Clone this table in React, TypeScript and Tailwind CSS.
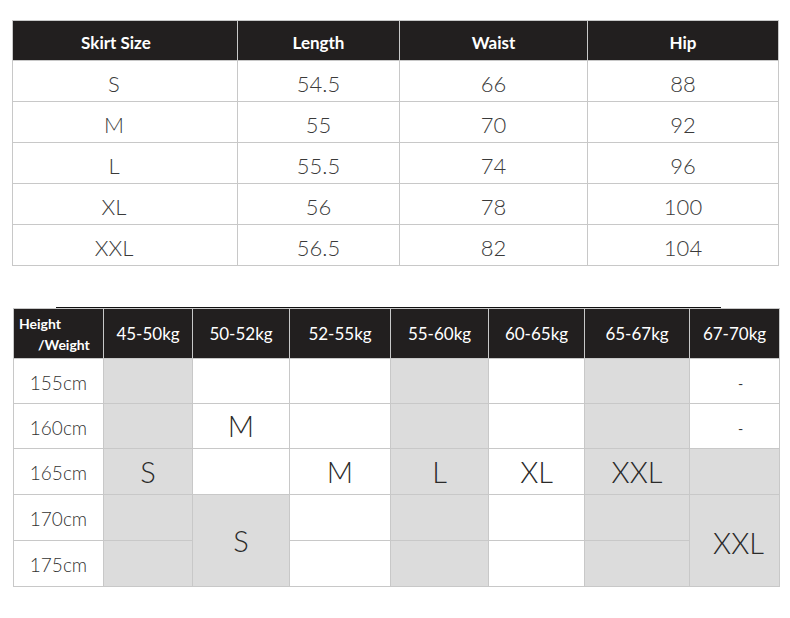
const skirt = [
  ['S', '54.5', '66', '88'],
  ['M', '55', '70', '92'],
  ['L', '55.5', '74', '96'],
  ['XL', '56', '78', '100'],
  ['XXL', '56.5', '82', '104'],
]

const weights = ['45-50kg', '50-52kg', '52-55kg', '55-60kg', '60-65kg', '65-67kg', '67-70kg']
const heights = ['155cm', '160cm', '165cm', '170cm', '175cm']

const gray = 'bg-[#dcdcdc]'
const white = 'bg-white'
const big = 'flex items-center justify-center text-[29px] font-light text-[#2a2a2a]'

export default function App() {
  return (
    <div className="w-[790px] h-[618px] bg-white pt-5 pl-3 font-['Lato',sans-serif]">
      {/* skirt size table */}
      <div className="grid w-[767px] grid-cols-[224px_161px_187px_190px] grid-rows-[39px_40px_40px_40px_40px_40px] gap-px bg-[#c8c8c8] p-px">
        {['Skirt Size', 'Length', 'Waist', 'Hip'].map((h, i) => (
          <div
            key={h}
            className={`flex items-center justify-center bg-[#221f1f] pt-1 text-[17px] font-bold text-white ${i === 0 ? 'pr-[18px]' : ''}`}
          >
            {h}
          </div>
        ))}
        {skirt.map((row) =>
          row.map((v, i) => (
            <div
              key={row[0] + i}
              className={`flex items-center justify-center bg-white pt-1 text-[22px] font-light text-[#3a3a3a] ${i === 0 ? 'pr-[22px]' : ''}`}
            >
              {v}
            </div>
          ))
        )}
      </div>

      {/* height / weight table */}
      <div className="mt-[41px] ml-[44px] h-px w-[665px] bg-[#111]" />
      <div className="ml-px grid w-[767px] grid-cols-[89px_88px_96px_100px_97px_95px_104px_89px] grid-rows-[49px_44px_44px_45px_45px_45px] gap-px bg-[#c8c8c8] p-px">
        <div className="flex flex-col justify-center bg-[#221f1f] pl-[5px] text-[14px] font-bold leading-[21px] text-white">
          <span>Height</span>
          <span className="pl-[19px]">/Weight</span>
        </div>
        {weights.map((w) => (
          <div key={w} className="flex items-center justify-center bg-[#221f1f] text-[17px] text-white">
            {w}
          </div>
        ))}

        {heights.map((h, r) => (
          <div
            key={h}
            className="col-start-1 flex items-center justify-center bg-white pt-1 text-[19px] font-light text-[#333]"
            style={{ gridRowStart: r + 2 }}
          >
            {h}
          </div>
        ))}

        {/* 45-50kg */}
        <div className={`col-start-2 row-start-2 ${gray}`} />
        <div className={`col-start-2 row-start-3 ${gray}`} />
        <div className={`col-start-2 row-start-4 ${gray} ${big}`}>S</div>
        <div className={`col-start-2 row-start-5 ${gray}`} />
        <div className={`col-start-2 row-start-6 ${gray}`} />

        {/* 50-52kg */}
        <div className={`col-start-3 row-start-2 ${white}`} />
        <div className={`col-start-3 row-start-3 ${white} ${big}`}>M</div>
        <div className={`col-start-3 row-start-4 ${white}`} />
        <div className={`col-start-3 row-start-5 row-span-2 ${gray} ${big}`}>S</div>

        {/* 52-55kg */}
        <div className={`col-start-4 row-start-2 ${white}`} />
        <div className={`col-start-4 row-start-3 ${white}`} />
        <div className={`col-start-4 row-start-4 ${white} ${big}`}>M</div>
        <div className={`col-start-4 row-start-5 ${white}`} />
        <div className={`col-start-4 row-start-6 ${white}`} />

        {/* 55-60kg */}
        <div className={`col-start-5 row-start-2 ${gray}`} />
        <div className={`col-start-5 row-start-3 ${gray}`} />
        <div className={`col-start-5 row-start-4 ${gray} ${big}`}>L</div>
        <div className={`col-start-5 row-start-5 ${gray}`} />
        <div className={`col-start-5 row-start-6 ${gray}`} />

        {/* 60-65kg */}
        <div className={`col-start-6 row-start-2 ${white}`} />
        <div className={`col-start-6 row-start-3 ${white}`} />
        <div className={`col-start-6 row-start-4 ${white} ${big}`}>XL</div>
        <div className={`col-start-6 row-start-5 ${white}`} />
        <div className={`col-start-6 row-start-6 ${white}`} />

        {/* 65-67kg */}
        <div className={`col-start-7 row-start-2 ${gray}`} />
        <div className={`col-start-7 row-start-3 ${gray}`} />
        <div className={`col-start-7 row-start-4 ${gray} ${big}`}>XXL</div>
        <div className={`col-start-7 row-start-5 ${gray}`} />
        <div className={`col-start-7 row-start-6 ${gray}`} />

        {/* 67-70kg */}
        <div className={`col-start-8 row-start-2 ${white} flex items-center justify-center pt-1 pl-3 text-[14px] text-[#333]`}>-</div>
        <div className={`col-start-8 row-start-3 ${white} flex items-center justify-center pt-1 pl-3 text-[14px] text-[#333]`}>-</div>
        <div className={`col-start-8 row-start-4 ${gray}`} />
        <div className={`col-start-8 row-start-5 row-span-2 ${gray} ${big} pt-1 pl-2`}>XXL</div>
      </div>
    </div>
  )
}
